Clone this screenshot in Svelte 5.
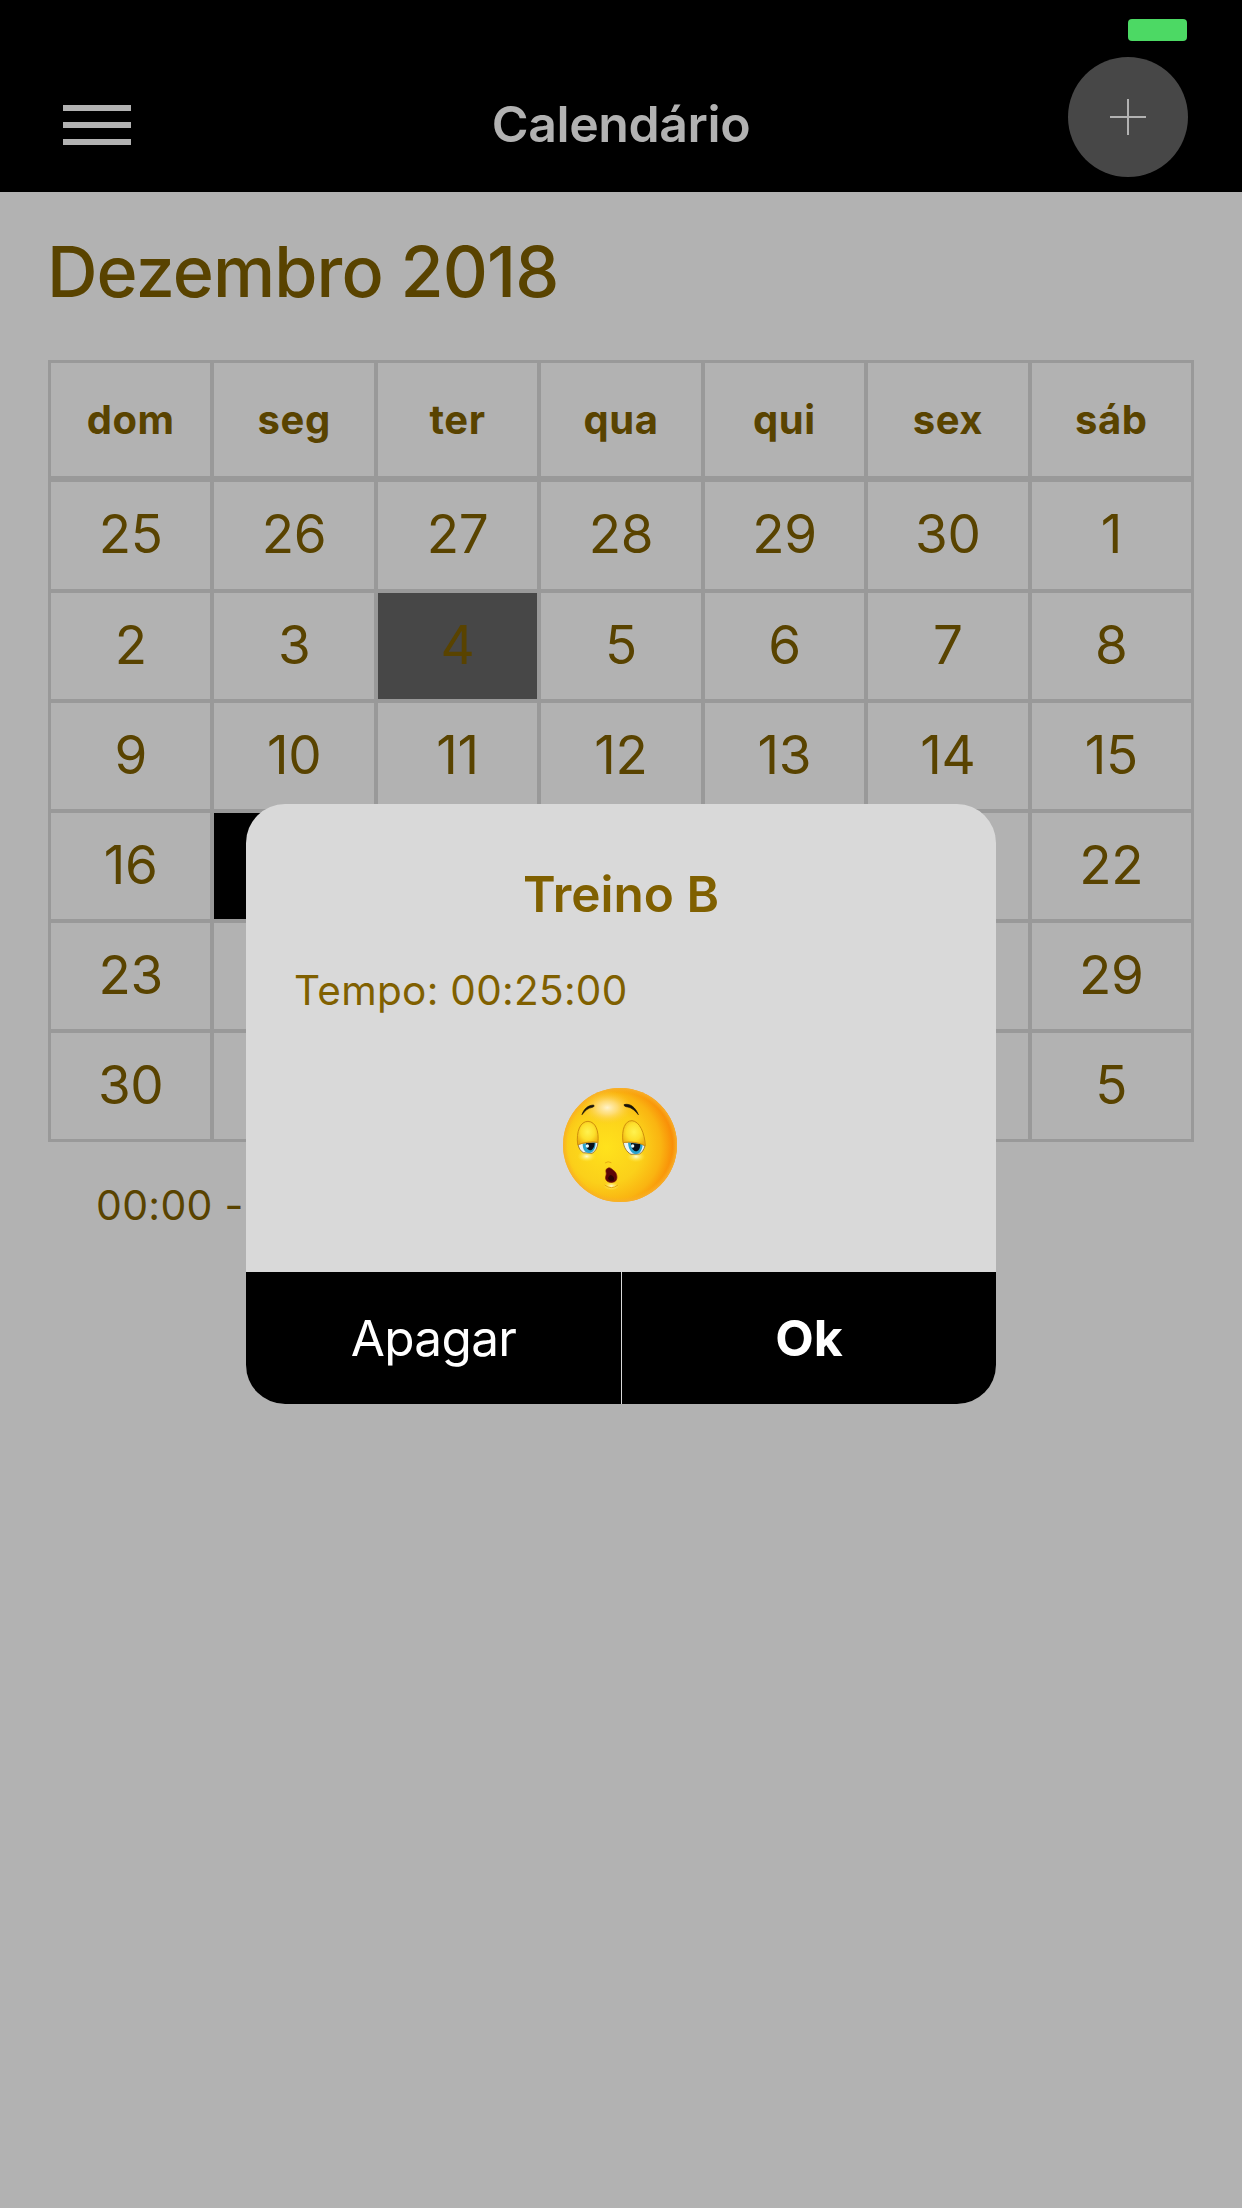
<script lang="ts">
  const weekdays = ['dom', 'seg', 'ter', 'qua', 'qui', 'sex', 'sáb'];
  // Days behind the open dialog are left blank.
  const weeks: (number | null)[][] = [
    [25, 26, 27, 28, 29, 30, 1],
    [2, 3, 4, 5, 6, 7, 8],
    [9, 10, 11, 12, 13, 14, 15],
    [16, null, null, null, null, null, 22],
    [23, null, null, null, null, null, 29],
    [30, null, null, null, null, null, 5],
  ];
  const isToday = (w: number, d: number) => w === 1 && d === 2;
  const isSelected = (w: number, d: number) => w === 3 && d === 1;
</script>

<div class="screen">
  <header>
    <div class="status"><span class="battery"></span></div>
    <nav>
      <button class="menu" aria-label="Menu"><i></i><i></i><i></i></button>
      <h1>Calendário</h1>
      <button class="add" aria-label="Adicionar">
        <svg viewBox="0 0 36 36" width="36" height="36"><path d="M18 0v36M0 18h36" stroke="#b2b2b2" stroke-width="2" /></svg>
      </button>
    </nav>
  </header>

  <main>
    <h2>Dezembro 2018</h2>
    <div class="calendar">
      {#each weekdays as name}
        <div class="cell head">{name}</div>
      {/each}
      {#each weeks as week, w}
        {#each week as day, d}
          <div class="cell" class:today={isToday(w, d)} class:selected={isSelected(w, d)}>{day ?? ''}</div>
        {/each}
      {/each}
    </div>
    <p class="event">00:00 -</p>
  </main>

  <div class="overlay">
    <div class="dialog">
      <div class="body">
        <h3>Treino B</h3>
        <p>Tempo: 00:25:00</p>
        <svg class="face" viewBox="39 39 342 342" width="114" height="114">
          <defs>
            <radialGradient id="skin" cx="0.38" cy="0.52" r="0.64">
              <stop offset="0" stop-color="#ffe21c" />
              <stop offset="0.5" stop-color="#fbd01a" />
              <stop offset="0.75" stop-color="#fab411" />
              <stop offset="0.92" stop-color="#f98c07" />
              <stop offset="1" stop-color="#f67d05" />
            </radialGradient>
            <radialGradient id="edge" cx="0.5" cy="0.5" r="0.5">
              <stop offset="0.92" stop-color="#f8b420" stop-opacity="0" />
              <stop offset="1" stop-color="#f8b02a" />
            </radialGradient>
            <radialGradient id="shine">
              <stop offset="0" stop-color="#fff3cc" />
              <stop offset="0.4" stop-color="#ffe08a" stop-opacity="0.8" />
              <stop offset="1" stop-color="#fdc82a" stop-opacity="0" />
            </radialGradient>
            <radialGradient id="glow">
              <stop offset="0" stop-color="#fffbd0" />
              <stop offset="1" stop-color="#ffe93c" stop-opacity="0" />
            </radialGradient>
            <radialGradient id="lid" cx="0.5" cy="0.45" r="0.6">
              <stop offset="0" stop-color="#fff250" />
              <stop offset="0.55" stop-color="#fde02c" />
              <stop offset="1" stop-color="#eeb010" />
            </radialGradient>
          </defs>
          <circle cx="210" cy="210" r="171" fill="url(#skin)" />
          <circle cx="210" cy="210" r="171" fill="url(#edge)" />
          <ellipse cx="172" cy="98" rx="76" ry="50" fill="url(#shine)" />
          <path d="M96 119C102 101 114 91 131 90C133 93 132 96 127 97C114 99 106 106 96 119Z" fill="#16120a" stroke="#16120a" stroke-width="2" />
          <path d="M222 89C239 84 256 96 265 119C256 108 246 98 233 96C226 95 222 93 222 89Z" fill="#16120a" stroke="#16120a" stroke-width="2" />
          <ellipse cx="110" cy="244" rx="28" ry="17" fill="url(#glow)" />
          <ellipse cx="258" cy="245" rx="28" ry="17" fill="url(#glow)" />
          <path d="M84 208C99 204 128 200 144 202C142 219 136 230 126 235L100 233C91 228 86 219 84 208Z" fill="#e9f5f8" stroke="#8a6a36" stroke-width="2.5" />
          <path d="M220 202C240 199 269 205 285 212C281 225 276 233 268 237L243 238C229 230 222 217 220 202Z" fill="#e9f5f8" stroke="#8a6a36" stroke-width="2.5" />
          <path d="M98 206L137 202C137 222 130 234 117 234C104 233 98 222 98 206Z" fill="#2ba3cc" />
          <path d="M234 202L278 208C277 226 269 238 257 238C243 236 235 221 234 202Z" fill="#2ba3cc" />
          <path d="M108 205L134 203C134 215 128 226 120 226C112 225 108 217 108 205Z" fill="#081019" />
          <path d="M243 204L271 207C271 220 266 229 257 229C248 227 243 217 243 204Z" fill="#081019" />
          <circle cx="112" cy="213" r="5" fill="#e8fbff" />
          <circle cx="248" cy="213" r="5" fill="#e8fbff" />
          <path d="M83 209C78 169 91 139 114 139C137 140 147 168 144 202C125 199 102 202 83 209Z" fill="url(#lid)" stroke="#cf8f0c" stroke-width="3" />
          <path d="M219 203C214 163 225 137 246 137C269 139 284 174 286 212C265 202 241 199 219 203Z" fill="url(#lid)" stroke="#cf8f0c" stroke-width="3" />
          <path d="M165 264Q174 257 184 263" fill="none" stroke="#e5ab12" stroke-width="3" />
          <ellipse cx="184" cy="333" rx="24" ry="13" fill="url(#glow)" />
          <path d="M173 280C180 274 189 286 195 290C203 300 203 315 194 320C184 325 170 322 167 312C165 304 171 300 168 291C167 286 168 282 173 280Z" fill="#5b0607" stroke="#7d1a08" stroke-width="2" />
          <path d="M180 300C188 301 195 308 191 316C184 320 174 316 174 309Z" fill="#2b0203" />
          <path d="M164 330Q184 346 204 330" fill="none" stroke="#e7a80c" stroke-width="3" />
        </svg>
      </div>
      <div class="actions">
        <button>Apagar</button>
        <button class="ok">Ok</button>
      </div>
    </div>
  </div>
</div>

<style>
  :global(body) {
    background: #b2b2b2;
  }
  .screen {
    position: relative;
    width: 1242px;
    height: 2208px;
    overflow: hidden;
    background: #b2b2b2;
    color: #594300;
    font-family: Inter, 'Liberation Sans', sans-serif;
  }
  h1, h2, h3, p {
    margin: 0;
  }
  button {
    border: 0;
    padding: 0;
    background: none;
    color: inherit;
    font: inherit;
  }
  header {
    height: 192px;
    background: #000;
    color: #b2b2b2;
  }
  .status {
    display: flex;
    justify-content: flex-end;
    box-sizing: border-box;
    height: 57px;
    padding: 19px 55px 0 0;
  }
  .battery {
    width: 59px;
    height: 22px;
    border-radius: 4px;
    background: #4cd964;
  }
  nav {
    display: grid;
    grid-template-columns: 120px 1fr 120px;
    padding: 0 54px 0 54px;
  }
  .menu {
    display: flex;
    flex-direction: column;
    gap: 11px;
    padding: 48px 0 0 9px;
  }
  .menu i {
    width: 67.5px;
    height: 6px;
    background: #b2b2b2;
  }
  h1 {
    font-size: 50px;
    line-height: 135px;
    font-weight: 600;
    text-align: center;
    letter-spacing: -0.4px;
  }
  .add {
    display: grid;
    place-items: center;
    width: 120px;
    height: 120px;
    border-radius: 50%;
    background: #474747;
  }
  main {
    padding: 0 48px;
  }
  h2 {
    margin-left: -1px;
    font-size: 70px;
    line-height: 159px;
    padding-bottom: 9px;
    font-weight: 500;
    letter-spacing: -0.9px;
  }
  .calendar {
    display: grid;
    grid-template-columns: repeat(7, 1fr);
    grid-template-rows: 119px 111px repeat(5, 110px);
    border: 1px solid #999;
  }
  .cell {
    display: flex;
    align-items: center;
    justify-content: center;
    border: 2px solid #999;
    padding-bottom: 3px;
    font-size: 53px;
    line-height: 60px;
    letter-spacing: -0.3px;
  }
  .head {
    border-bottom-width: 4px;
    padding: 0;
    font-size: 40px;
    font-weight: 700;
    letter-spacing: 0.6px;
  }
  .today {
    background: #474747;
  }
  .selected {
    background: #000;
  }
  .event {
    padding-left: 48px;
    font-size: 41px;
    line-height: 126px;
    letter-spacing: 0.3px;
  }
  .overlay {
    position: absolute;
    inset: 0;
    display: grid;
    place-items: center;
  }
  .dialog {
    display: flex;
    flex-direction: column;
    width: 750px;
    height: 600px;
    border-radius: 39px;
    overflow: hidden;
    background: #d9d9d9;
    color: #806000;
  }
  .body {
    flex: 1;
    padding: 60px 48px 0;
  }
  h3 {
    font-size: 49.5px;
    line-height: 60px;
    font-weight: 600;
    text-align: center;
  }
  .body p {
    margin-top: 37px;
    font-size: 40.5px;
    line-height: 60px;
    letter-spacing: 0.3px;
  }
  .face {
    display: block;
    margin: 67px auto 0;
    transform: translateX(-1px);
  }
  .actions {
    display: grid;
    grid-template-columns: 375px 1fr;
    gap: 1px;
    height: 132px;
  }
  .actions button {
    background: #000;
    color: #fff;
    font-size: 49.5px;
    line-height: 132px;
    letter-spacing: -0.7px;
  }
  .actions .ok {
    font-weight: 700;
    font-size: 50px;
    letter-spacing: 0;
  }
</style>
